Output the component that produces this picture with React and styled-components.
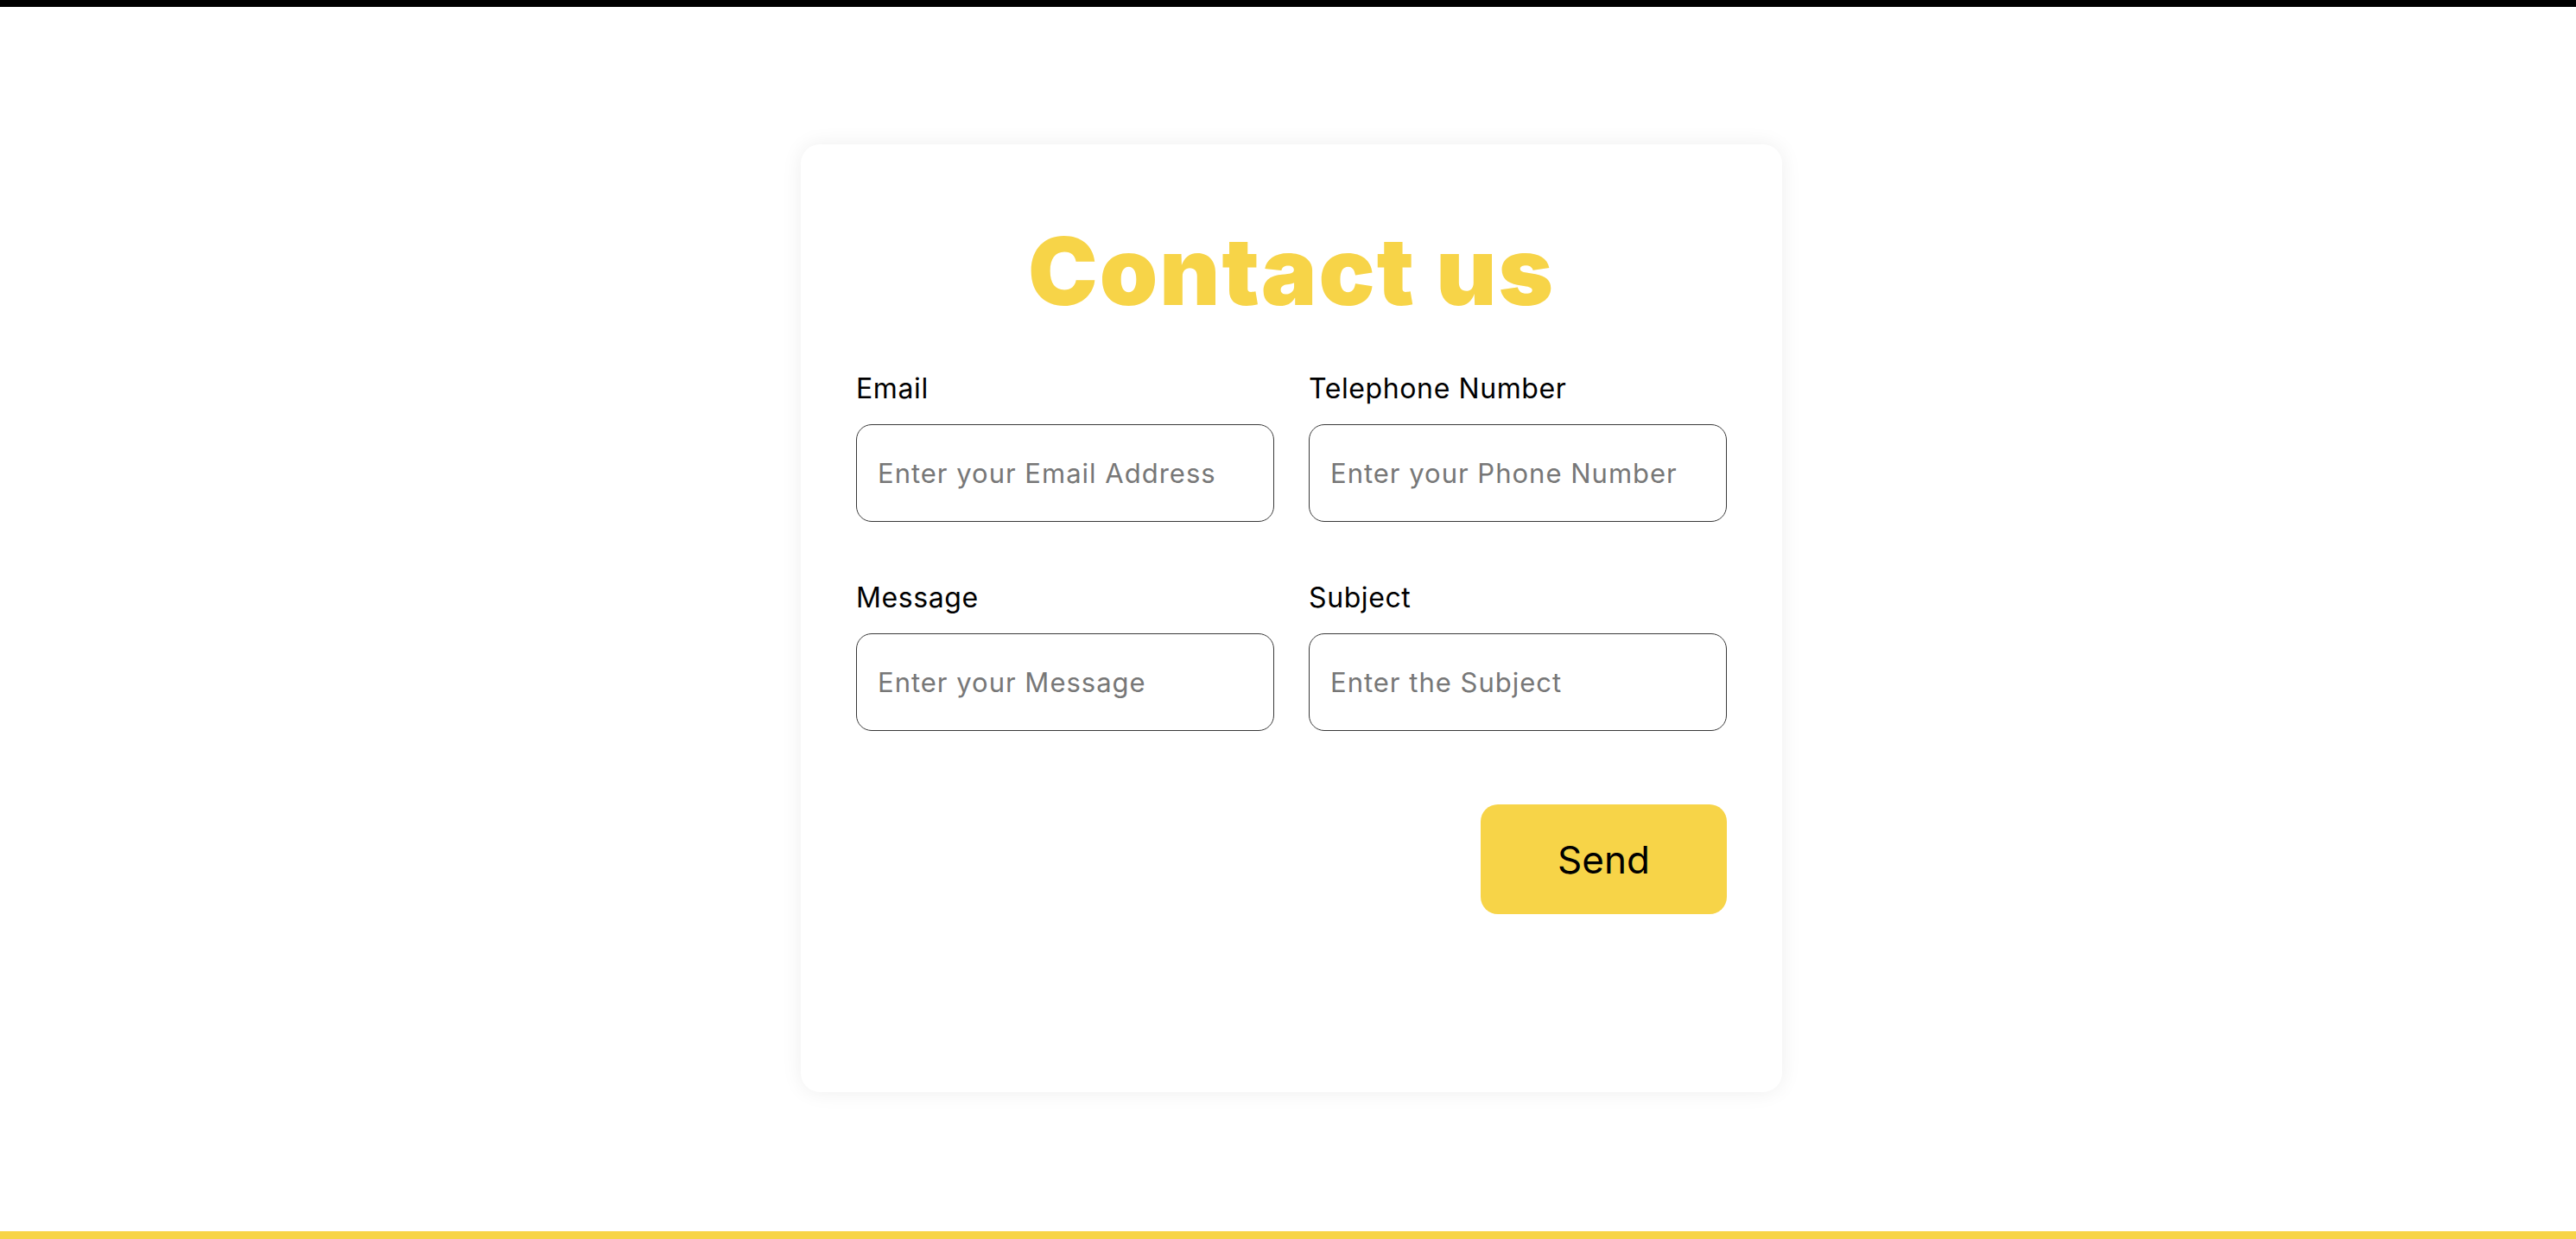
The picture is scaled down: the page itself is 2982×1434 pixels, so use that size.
import React from "react";
import styled, { createGlobalStyle } from "styled-components";

const GlobalStyle = createGlobalStyle`
  * {
    box-sizing: border-box;
  }
  html, body {
    margin: 0;
    padding: 0;
    background: #ffffff;
    font-family: Inter, "Noto Sans", sans-serif;
  }
`;

const Page = styled.div`
  display: flex;
  flex-direction: column;
  min-height: 1434px;
`;

const TopBar = styled.div`
  height: 8px;
  background: #000000;
`;

const Main = styled.main`
  flex: 1;
  display: flex;
  justify-content: center;
  align-items: flex-start;
  padding-top: 159px;
  padding-left: 8px;
`;

const Footer = styled.div`
  height: 9px;
  background: #f7d448;
`;

const Card = styled.section`
  width: 1136px;
  height: 1097px;
  padding: 82px 64px 0;
  background: #ffffff;
  border-radius: 22px;
  box-shadow: 0 0 24px rgba(0, 0, 0, 0.07);
  display: flex;
  flex-direction: column;
`;

const Title = styled.h1`
  margin: 0 0 52px;
  text-align: center;
  font-family: Inter, sans-serif;
  font-weight: 900;
  font-size: 108px;
  line-height: 1.2;
  letter-spacing: 2px;
  color: #f7d448;
`;

const Form = styled.form`
  display: flex;
  flex-direction: column;
`;

const Grid = styled.div`
  display: grid;
  grid-template-columns: 484px 484px;
  column-gap: 40px;
  row-gap: 69px;
`;

const Field = styled.label`
  display: flex;
  flex-direction: column;
  gap: 22px;
`;

const LabelText = styled.span`
  font-size: 32px;
  line-height: 1.2;
  letter-spacing: 0.6px;
  color: #000000;
  font-weight: 400;
`;

const Input = styled.input`
  height: 113px;
  width: 100%;
  padding: 0 24px;
  border: 1px solid #3a3a3a;
  border-radius: 18px;
  font-family: Inter, sans-serif;
  font-size: 31px;
  letter-spacing: 1px;
  color: #222;
  outline: none;

  &::placeholder {
    color: #777777;
  }
`;

const Actions = styled.div`
  display: flex;
  justify-content: flex-end;
  margin-top: 85px;
`;

const SendButton = styled.button`
  width: 285px;
  height: 127px;
  border: none;
  border-radius: 20px;
  background: #f7d448;
  color: #000000;
  font-family: Inter, sans-serif;
  font-size: 44px;
  font-weight: 400;
  cursor: pointer;
`;

const fields = [
  { label: "Email", placeholder: "Enter your Email Address", type: "email" },
  { label: "Telephone Number", placeholder: "Enter your Phone Number", type: "tel" },
  { label: "Message", placeholder: "Enter your Message", type: "text" },
  { label: "Subject", placeholder: "Enter the Subject", type: "text" },
];

const App = () => {
  return (
    <>
      <GlobalStyle />
      <Page>
        <TopBar />
        <Main>
          <Card>
            <Title>Contact us</Title>
            <Form onSubmit={(e) => e.preventDefault()}>
              <Grid>
                {fields.map((f) => (
                  <Field key={f.label}>
                    <LabelText>{f.label}</LabelText>
                    <Input type={f.type} placeholder={f.placeholder} />
                  </Field>
                ))}
              </Grid>
              <Actions>
                <SendButton type="submit">Send</SendButton>
              </Actions>
            </Form>
          </Card>
        </Main>
        <Footer />
      </Page>
    </>
  );
};

export default App;
